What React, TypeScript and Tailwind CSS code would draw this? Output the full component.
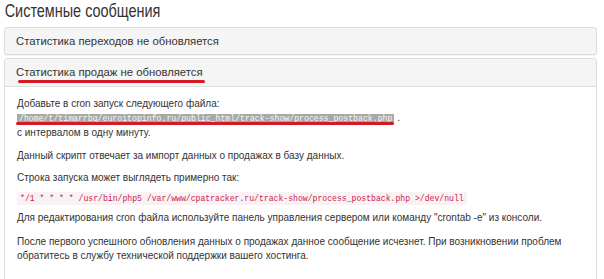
export default function App() {
  return (
    <div className="h-[279px] w-[604px] overflow-hidden bg-white font-['Liberation_Sans',Arial,sans-serif] text-[#333]">
      <h1 className="origin-left scale-x-[0.78] pl-[6px] pt-0 text-[18.5px] leading-[22px] text-[#333]">Системные сообщения</h1>

      <div className="mx-[4px] mt-[5px] flex h-[28px] w-[593px] items-center rounded-[3px] border border-[#ddd] bg-[#f5f5f5] px-[11px] text-[11.3px] shadow-[0_1px_1px_rgba(0,0,0,0.05)]">
        Статистика переходов не обновляется
      </div>

      <div className="mx-[4px] mt-[3px] w-[593px] rounded-[3px] border border-[#ddd] bg-white shadow-[0_1px_1px_rgba(0,0,0,0.05)]">
        <div className="flex h-[28px] items-center rounded-t-[3px] border-b border-[#ddd] bg-[#f5f5f5] px-[11px] text-[11.3px]">
          <span className="relative">
            Статистика продаж не обновляется
            <span className="absolute left-[2px] right-[-2px] top-[16px] h-[3px] rounded-full bg-[#d41a24]" />
          </span>
        </div>

        <div className="px-[12px] pb-[19px] pt-[10px] text-[10px] leading-[14px]">
          <p className="mb-[9px]">
            Добавьте в cron запуск следующего файла:
            <br />
            <span className="relative">
              <code className="bg-[#a8a8a8] px-[2px] font-['Liberation_Mono',monospace] text-[8.2px] text-[#f5f5f5]">
                /home/t/timarrbq/euroitopinfo.ru/public_html/track-show/process_postback.php
              </code>
              <span className="absolute left-[-1px] right-[0px] top-[10px] h-[3px] rounded-full bg-[#d41a24]" />
            </span>{' '}
            .
            <br />с интервалом в одну минуту.
          </p>
          <p className="mb-[8px]">Данный скрипт отвечает за импорт данных о продажах в базу данных.</p>
          <p className="mb-[6px]">Строка запуска может выглядеть примерно так:</p>
          <p className="mb-[5px]">
            <code className="rounded-[2px] bg-[#f9f2f4] px-[3px] py-[2px] font-['Liberation_Mono',monospace] text-[8.15px] text-[#c7254e]">
              */1 * * * * /usr/bin/php5 /var/www/cpatracker.ru/track-show/process_postback.php &gt;/dev/null
            </code>
          </p>
          <p className="mb-[10px]">
            Для редактирования cron файла используйте панель управления сервером или команду "crontab -e" из консоли.
          </p>
          <p>
            После первого успешного обновления данных о продажах данное сообщение исчезнет. При возникновении проблем
            <br />
            обратитесь в службу технической поддержки вашего хостинга.
          </p>
        </div>
      </div>
    </div>
  )
}
